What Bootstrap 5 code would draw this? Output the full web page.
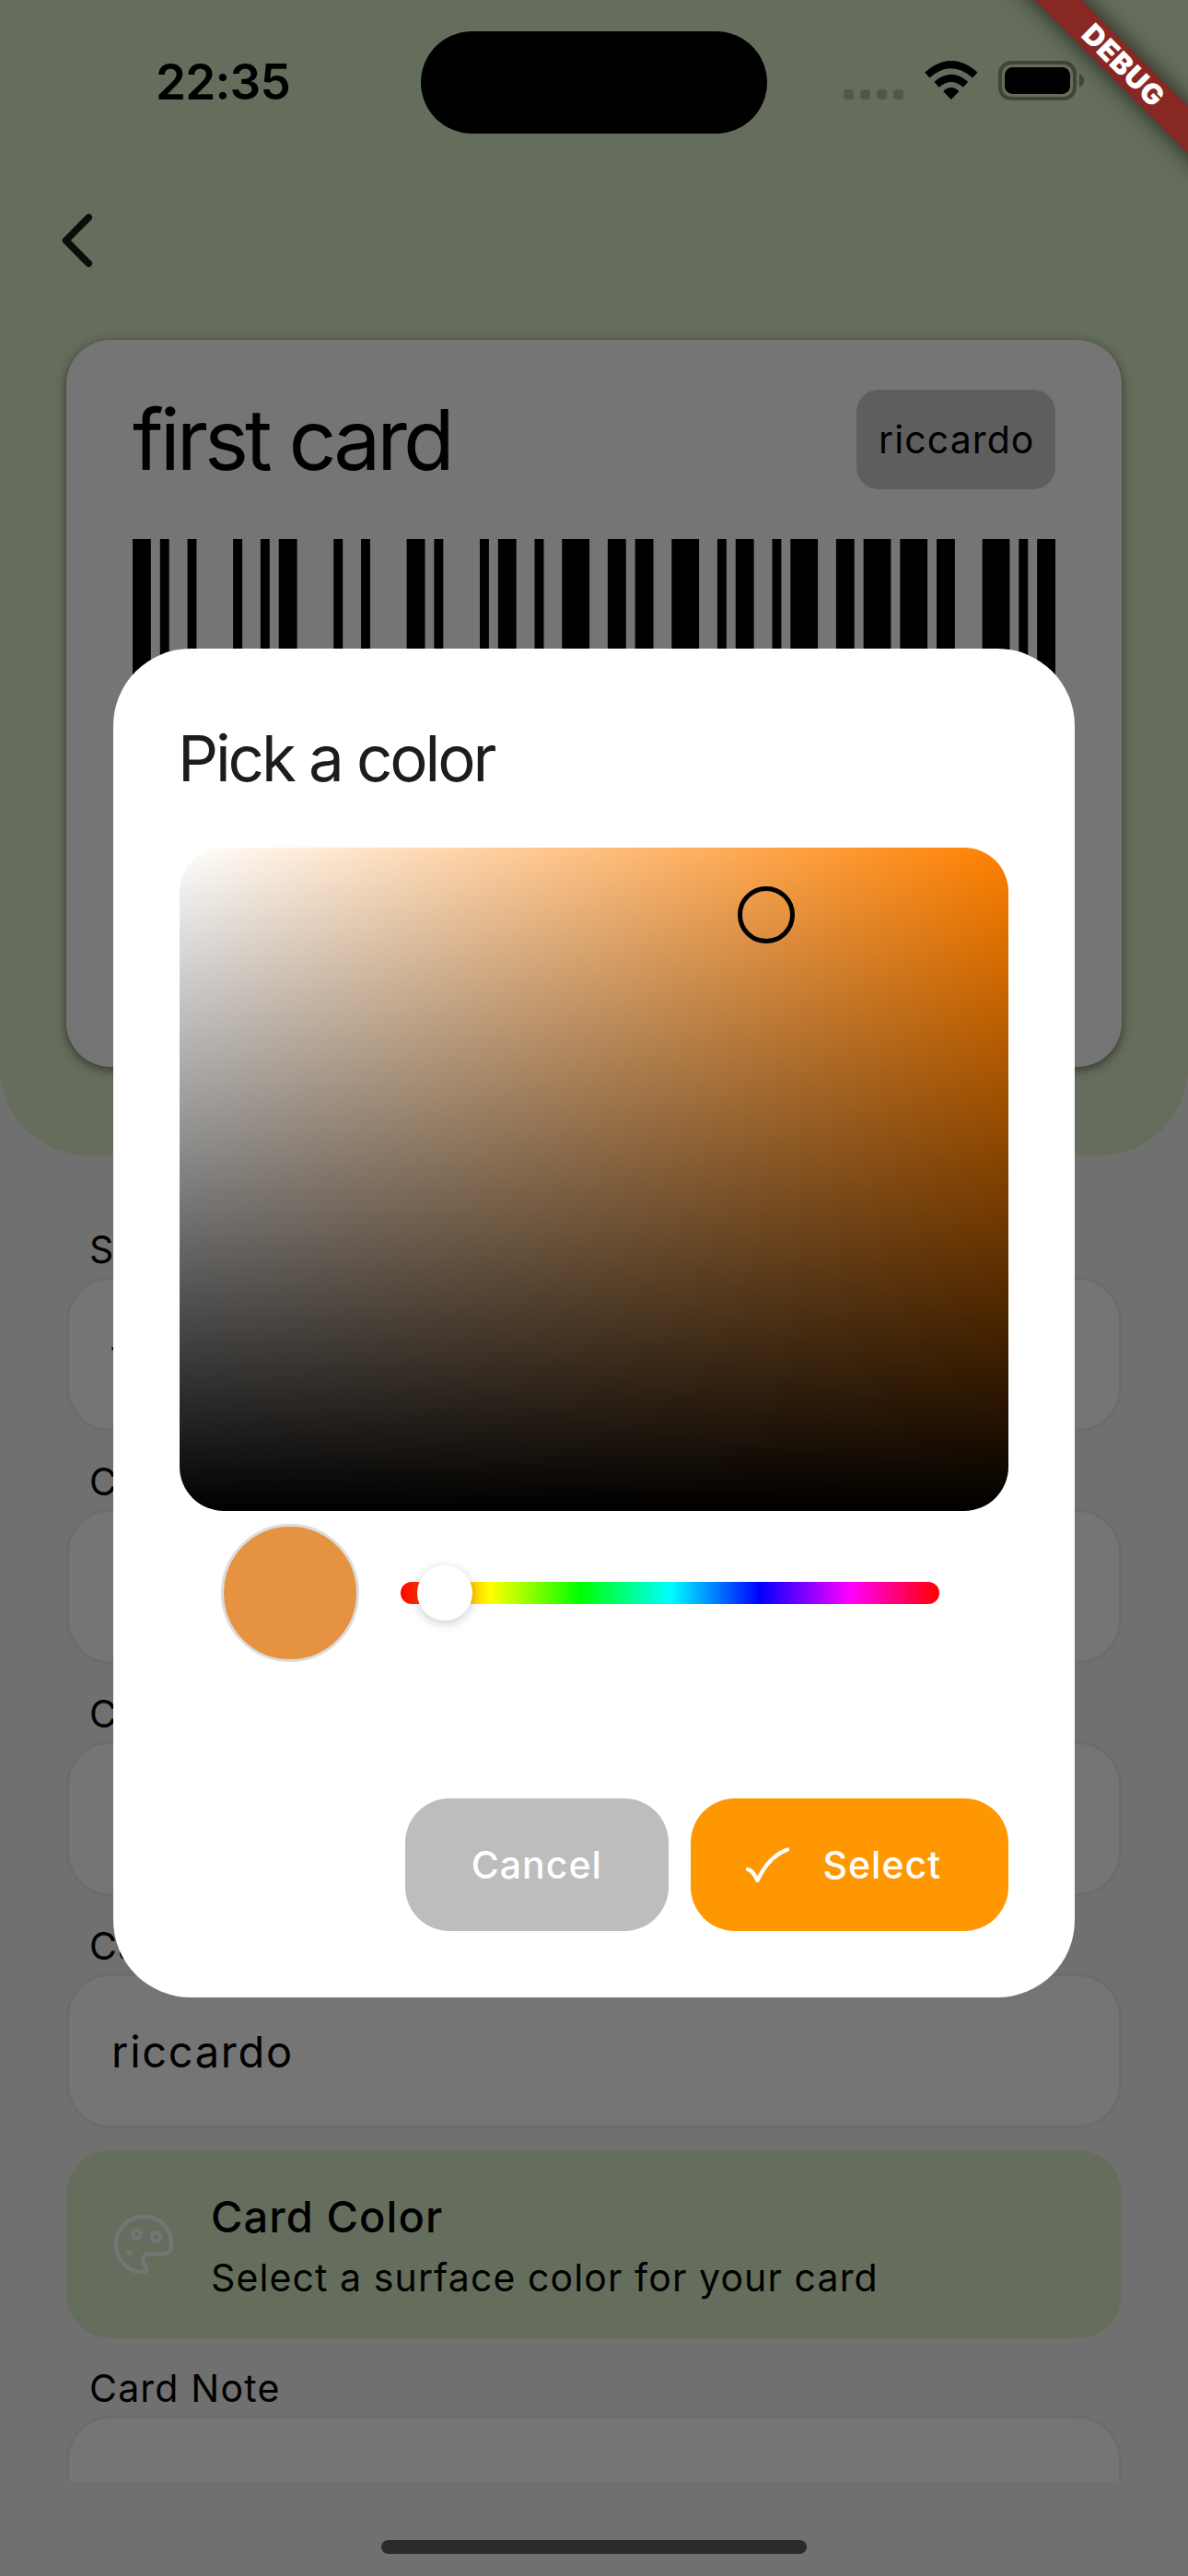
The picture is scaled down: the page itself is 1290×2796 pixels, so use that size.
<!DOCTYPE html>
<html lang="en">
<head>
<meta charset="utf-8">
<meta name="viewport" content="width=device-width, initial-scale=1">
<title>Pick a color</title>
<link href="https://cdn.jsdelivr.net/npm/bootstrap@5.3.0/dist/css/bootstrap.min.css" rel="stylesheet">
<style>
  body { font-family: Inter, "Liberation Sans", sans-serif; color: #000; background: #707070; }
  .screen { width: 1290px; height: 2796px; background: #707070; }
  .hero { height: 1254px; background: #656e5c; border-radius: 0 0 96px 96px; }
  .status { height: 177px; padding: 33.5px 0 0 169px; }
  .clock { font-size: 53px; font-weight: 600; line-height: 110px; width: 288px; letter-spacing: -.8px; }
  .island { width: 376px; height: 111px; border-radius: 56px; background: #000; }
  .status-icons { height: 43px; margin: 32px 0 0 82.5px; }
  .nav-row { height: 192px; padding: 52px 0 0 62px; }
  .loyalty { height: 789px; margin: 0 72px; padding: 54px 72px 0; border-radius: 48px; background: #757575; box-shadow: 0 3px 12px rgba(0,0,0,.5); }
  .loyalty-name { font-size: 91px; line-height: 108px; letter-spacing: -4px; }
  .tag { width: 216px; height: 108px; padding-left: 24px; border-radius: 24px; background: #5e5e5e; font-size: 41px; line-height: 108px; letter-spacing: 1.1px; }
  .barcode { width: 1002px; height: 420px; margin-top: 54px; }
  .sheet { height: 1440px; padding: 72px 72px 0; }
  .field-label { font-size: 41px; line-height: 60px; padding-left: 25px; letter-spacing: 1.2px; }
  .field-box { height: 168px; margin-bottom: 24px; padding: 0 46px; border: 3px solid #6c6c6c; border-radius: 48px; background: #757575; font-size: 47px; line-height: 164px; letter-spacing: 1.7px; }
  .tile { height: 204px; margin-bottom: 24px; padding-left: 48px; border-radius: 48px; background: #656e5c; }
  .tile-icon { width: 72px; height: 72px; margin-right: 37px; }
  .tile-title { font-size: 47px; font-weight: 500; line-height: 72px; letter-spacing: 1.1px; }
  .tile-sub { font-size: 41px; line-height: 60px; letter-spacing: 1.1px; }
  .home-bar { width: 462px; height: 15px; border-radius: 8px; background: #2b2b2b; margin: 63px auto 0; }
  .dialog { left: 123px; top: 703.5px; width: 1044px; height: 1464px; padding: 72px; border-radius: 84px; background: #fff; }
  .dialog-title { font-size: 69px; line-height: 94px; color: #1c1b1f; margin: 0 0 50px -2px; letter-spacing: -3.1px; }
  .sv-area { height: 720px; border-radius: 48px; background: linear-gradient(to top, #000, transparent), linear-gradient(to right, #fff, #ff8000); }
  .sv-cursor { left: 606px; top: 42.5px; width: 62px; height: 62px; border: 5px solid #000; }
  .hue-row { height: 179px; padding: 0 75px 0 45px; }
  .swatch { width: 150px; height: 150px; border: 3px solid #dcdcdc; background: #e59241; }
  .hue-track { height: 24px; margin-left: 45px; border-radius: 12px; background: linear-gradient(to right, #f00, #ff0 16.67%, #0f0 33.33%, #0ff 50%, #00f 66.67%, #f0f 83.33%, #f00); }
  .hue-thumb { left: 18px; top: -18px; width: 60px; height: 60px; background: #fff; box-shadow: 0 3px 12px rgba(0,0,0,.2); }
  .dialog-actions { margin-top: 133px; gap: 24px; }
  .btn-pick { height: 144px; border: 0; border-radius: 48px; font-size: 41px; font-weight: 500; color: #fff; padding: 2px 0 0; letter-spacing: 1px; }
  .btn-grey { width: 285.5px; background: #bdbdbd; }
  .btn-orange { width: 345.5px; padding-left: 60px; background: #ff9800; }
  .check { margin-right: 36px; }
  .debug-clip { width: 240px; height: 240px; }
  .debug-band { width: 400px; height: 36px; left: -30px; top: 53px; transform: rotate(45deg); background: #882825; color: #fff; font-size: 31px; font-weight: 900; line-height: 36px; letter-spacing: .8px; box-shadow: 0 0 24px 2px rgba(0,0,0,.6); }
</style>
</head>
<body>
<div class="screen position-relative overflow-hidden">
  <header class="hero">
    <div class="status d-flex align-items-start">
      <div class="clock flex-shrink-0">22:35</div>
      <div class="island flex-shrink-0"></div>
      <svg class="status-icons flex-shrink-0" width="262" height="43" viewBox="0 0 262 43">
        <g fill="#51584a"><rect x="0" y="31" width="11" height="11" rx="3.5"/><rect x="18" y="31" width="11" height="11" rx="3.5"/><rect x="36" y="31" width="11" height="11" rx="3.5"/><rect x="54" y="31" width="11" height="11" rx="3.5"/></g>
        <path d="M116.800 42 L108.200 33.200 Q116.800 24.800 125.400 33.200 Z"/>
        <g fill="none" stroke="#000" stroke-width="8"><path d="M90.800 15.500 Q116.800 -7.500 142.800 15.500"/><path d="M101 25.800 Q116.800 11.800 132.600 25.800"/></g>
        <rect x="170" y="2" width="81" height="39" rx="12" fill="none" stroke="#3f4539" stroke-width="4"/>
        <rect x="175" y="7" width="71" height="29" rx="8.500"/>
        <path d="M256 14.500 Q261 16.500 261 21.500 T256 28.500 Z" fill="#3f4539"/>
      </svg>
    </div>
    <div class="nav-row">
      <svg width="44" height="64" viewBox="0 0 44 64" fill="none" stroke="#0b0d0a" stroke-width="7.500" stroke-linecap="round" stroke-linejoin="round"><path d="M34.300 7 L9.500 32 L34.300 57"/></svg>
    </div>
    <section class="loyalty">
      <div class="d-flex justify-content-between">
        <div class="loyalty-name">first card</div>
        <div class="tag">riccardo</div>
      </div>
      <svg class="barcode d-block" viewBox="0 0 101 10" preserveAspectRatio="none"><path d="M0 0h2v10h-2zM3 0h1v10h-1zM6 0h1v10h-1zM11 0h1v10h-1zM14 0h1v10h-1zM16 0h2v10h-2zM22 0h1v10h-1zM25 0h1v10h-1zM30 0h2v10h-2zM33 0h1v10h-1zM38 0h1v10h-1zM40 0h2v10h-2zM44 0h1v10h-1zM47 0h3v10h-3zM52 0h2v10h-2zM55 0h2v10h-2zM59 0h3v10h-3zM64 0h1v10h-1zM66 0h2v10h-2zM70 0h1v10h-1zM72 0h3v10h-3zM77 0h2v10h-2zM80 0h3v10h-3zM84 0h3v10h-3zM88 0h2v10h-2zM93 0h3v10h-3zM97 0h1v10h-1zM99 0h2v10h-2z"/></svg>
    </section>
  </header>

  <main class="sheet overflow-hidden">
    <div class="field-label">S</div>
    <div class="field-box">first card</div>
    <div class="field-label">C</div>
    <div class="field-box"></div>
    <div class="field-label">C</div>
    <div class="field-box"></div>
    <div class="field-label">Ca</div>
    <div class="field-box">riccardo</div>
    <div class="tile d-flex align-items-center">
      <svg class="tile-icon" viewBox="0 0 72 72" fill="none" stroke="#757575" stroke-width="4.300"><path d="M36 6 C18.500 6 6 20 6 36 C6 53 19 67 35.500 66 C39 66 40 64 38.500 61 C35.500 56 34 53 36.500 49 C38 46.500 40.500 46.500 44 46.500 H58 C64.500 46.500 66 42 66 36 C66 18 53.500 6 36 6 Z"/><circle cx="28.500" cy="25" r="4.500"/><circle cx="49.500" cy="28" r="4.500"/><circle cx="21" cy="45" r="3.200" fill="#757575" stroke="none"/></svg>
      <div>
        <div class="tile-title">Card Color</div>
        <div class="tile-sub">Select a surface color for your card</div>
      </div>
    </div>
    <div class="field-label">Card Note</div>
    <div class="field-box"></div>
  </main>
  <div class="home-bar"></div>

  <div class="dialog position-absolute" role="dialog">
    <div class="dialog-title">Pick a color</div>
    <div class="sv-area position-relative"><div class="sv-cursor position-absolute rounded-circle"></div></div>
    <div class="hue-row d-flex align-items-center">
      <div class="swatch rounded-circle flex-shrink-0"></div>
      <div class="hue-track position-relative flex-grow-1"><div class="hue-thumb position-absolute rounded-circle"></div></div>
    </div>
    <div class="dialog-actions d-flex justify-content-end">
      <button type="button" class="btn btn-pick btn-grey">Cancel</button>
      <button type="button" class="btn btn-pick btn-orange d-flex align-items-center">
        <svg class="check" width="48" height="40" viewBox="0 0 48 40" fill="none" stroke="#fff" stroke-width="4.300" stroke-linecap="round" stroke-linejoin="round"><path d="M2 24 C7 25 10 31 12.500 36 C20 20 30 8 45 2.500"/></svg>
        Select
      </button>
    </div>
  </div>

  <div class="debug-clip position-absolute top-0 end-0 overflow-hidden">
    <div class="debug-band position-absolute text-center">DEBUG</div>
  </div>
</div>
<script src="https://cdn.jsdelivr.net/npm/bootstrap@5.3.0/dist/js/bootstrap.bundle.min.js"></script>
</body>
</html>
